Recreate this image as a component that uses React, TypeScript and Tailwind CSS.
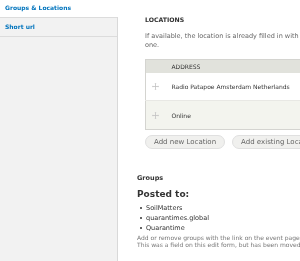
import React from "react"

function DragHandle() {
  return (
    <svg width="7" height="7" viewBox="0 0 7 7" className="shrink-0">
      <path d="M3.5 1v5M1 3.5h5" stroke="#c2c2c2" strokeWidth="0.8" />
      <path d="M3.5 0l-1 1.1h2zM3.5 7l-1-1.1h2zM0 3.5l1.1-1v2zM7 3.5l-1.1-1v2z" fill="#c2c2c2" />
    </svg>
  )
}

export default function App() {
  const groups = ["SoilMatters", "quarantimes.global", "Quarantime"]

  return (
    <div className="flex w-[300px] h-[261px] overflow-hidden bg-white antialiased will-change-transform font-['DejaVu_Sans',sans-serif]">
      {/* vertical tabs */}
      <div className="w-[118px] shrink-0 flex flex-col">
        <div className="h-[17px] flex items-center pl-[5px] pb-[2px] bg-white text-[6px] font-bold text-[#0074bd]">
          Groups &amp; Locations
        </div>
        <div className="flex-1 bg-[#f2f2f2] border-r border-[#d9d9d9]">
          <div className="h-[20px] flex items-center pl-[5px] pb-[2px] border-y border-[#dcdcdc] text-[6px] font-bold text-[#0074bd]">
            Short url
          </div>
        </div>
      </div>

      {/* pane */}
      <div className="w-[400px] shrink-0 pl-[19px] pt-[16px] text-[#333]">
        <div className="pl-[8px]">
          <h3 className="text-[6.2px] font-bold uppercase leading-[8px]">Locations</h3>
          <p className="mt-[8px] text-[6.5px] leading-[9px] text-[#666666]">
            If available, the location is already filled in with the group location, or add a new
            <br />
            one.
          </p>

          <table className="mt-[9px] w-[230px] border border-[#d4d4d0] border-collapse text-[6px] text-[#333]">
            <thead>
              <tr className="bg-[#e1e2dc] h-[13px]">
                <th className="w-[26px] p-0"></th>
                <th className="p-0 text-left font-normal uppercase">Address</th>
              </tr>
            </thead>
            <tbody>
              <tr className="bg-white h-[28px] border-b border-[#e8e8e4]">
                <td className="p-0 pl-[6px]"><DragHandle /></td>
                <td className="p-0">Radio Patapoe Amsterdam Netherlands</td>
              </tr>
              <tr className="bg-[#f3f4ee] h-[29px]">
                <td className="p-0 pl-[6px]"><DragHandle /></td>
                <td className="p-0">Online</td>
              </tr>
            </tbody>
          </table>

          <div className="mt-[5px] flex gap-[7px]">
            <button className="h-[14px] px-[8px] rounded-full border border-[#e0e0e0] bg-[#f0f0ee] text-[7px] text-[#666] leading-none">
              Add new Location
            </button>
            <button className="h-[14px] px-[8px] rounded-full border border-[#e0e0e0] bg-[#f0f0ee] text-[7px] text-[#666] leading-none">
              Add existing Location
            </button>
          </div>
        </div>

        <div className="mt-[25px]">
          <h3 className="text-[6.5px] font-bold leading-[8px]">Groups</h3>
          <h2 className="mt-[6px] text-[9px] font-bold leading-[12px]">Posted to:</h2>
          <ul className="mt-[3px] pl-[3px] text-[6.5px] leading-[10px] text-[#333]">
            {groups.map((g) => (
              <li key={g} className="flex items-center gap-[4px]">
                <span className="w-[2px] h-[2px] rounded-full bg-[#333]" />
                {g}
              </li>
            ))}
          </ul>
          <p className="mt-[1px] text-[6px] leading-[7px] text-[#777777]">
            Add or remove groups with the link on the event page.
            <br />
            This was a field on this edit form, but has been moved
          </p>
        </div>
      </div>
    </div>
  )
}
